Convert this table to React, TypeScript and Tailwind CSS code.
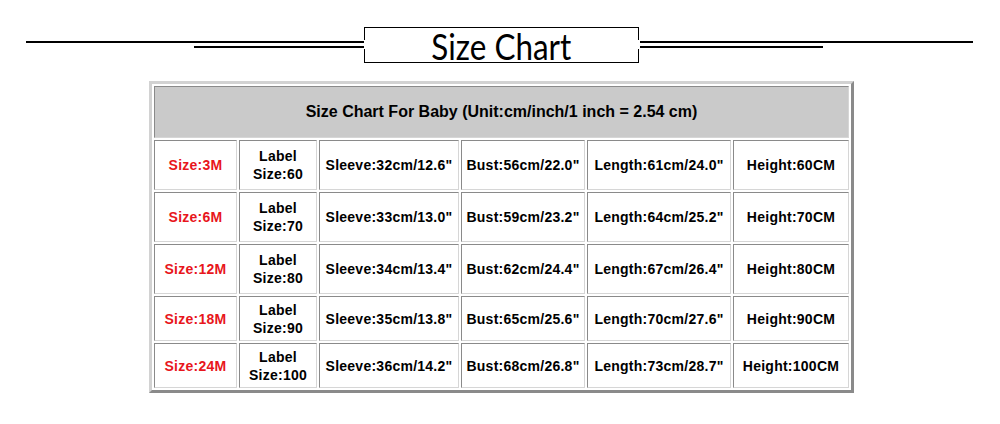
import React from "react";

const rows = [
  ["Size:3M", "60", "Sleeve:32cm/12.6\"", "Bust:56cm/22.0\"", "Length:61cm/24.0\"", "Height:60CM"],
  ["Size:6M", "70", "Sleeve:33cm/13.0\"", "Bust:59cm/23.2\"", "Length:64cm/25.2\"", "Height:70CM"],
  ["Size:12M", "80", "Sleeve:34cm/13.4\"", "Bust:62cm/24.4\"", "Length:67cm/26.4\"", "Height:80CM"],
  ["Size:18M", "90", "Sleeve:35cm/13.8\"", "Bust:65cm/25.6\"", "Length:70cm/27.6\"", "Height:90CM"],
  ["Size:24M", "100", "Sleeve:36cm/14.2\"", "Bust:68cm/26.8\"", "Length:73cm/28.7\"", "Height:100CM"],
];

const cell =
  "flex items-center justify-center text-center border border-t-[#8a8a8a] border-l-[#8a8a8a] border-r-[#d6d6d6] border-b-[#d6d6d6]";

export default function App() {
  return (
    <div className="w-[1000px] h-[424px] bg-white overflow-hidden" style={{ fontFamily: '"Liberation Sans", Arial, sans-serif' }}>
      {/* Title header */}
      <div className="flex items-start pt-[27px] pl-[26px]">
        <div className="w-[338px] flex flex-col items-end pt-[14px]">
          <div className="w-full h-[2px] bg-black" />
          <div className="w-[170px] h-[2px] bg-black mt-[3px]" />
        </div>
        <div className="relative w-[275px] h-[36px] border-t border-b border-black flex items-center justify-center">
          <div className="absolute left-0 top-0 w-px h-[12px] bg-black" />
          <div className="absolute left-0 bottom-0 w-px h-[13px] bg-black" />
          <div className="absolute right-0 top-0 w-px h-[12px] bg-black" />
          <div className="absolute right-0 bottom-0 w-px h-[13px] bg-black" />
          <span
            className="text-[37px] leading-none text-black mt-[1px] scale-x-[0.85] inline-block"
            style={{ fontFamily: 'Lato, "Open Sans", sans-serif' }}
          >
            Size Chart
          </span>
        </div>
        <div className="w-[334px] flex flex-col items-start pt-[14px] pl-[1px]">
          <div className="w-full h-[2px] bg-black" />
          <div className="w-[183px] h-[2px] bg-black mt-[3px]" />
        </div>
      </div>

      {/* Table */}
      <div className="mt-[18px] ml-[149px] w-[705px] border-[3px] border-t-[#d2d2d2] border-l-[#d2d2d2] border-r-[#8a8a8a] border-b-[#8a8a8a] p-[2px]">
        <div className="grid grid-cols-[83px_78px_140px_124px_144px_116px] grid-rows-[52px_50px_50px_50px_45px_45px] gap-[2px] text-[14px] tracking-[0.25px] font-bold text-black leading-[18px]">
          <div className={`${cell} col-span-6 bg-[#cacaca] text-[16px] tracking-normal`}>
            Size Chart For Baby (Unit:cm/inch/1 inch = 2.54 cm)
          </div>
          {rows.map((r, i) => (
            <React.Fragment key={i}>
              <div className={`${cell} text-[#e8161c]`}>{r[0]}</div>
              <div className={cell}>
                <span>
                  Label
                  <br />
                  Size:{r[1]}
                </span>
              </div>
              <div className={cell}>{r[2]}</div>
              <div className={cell}>{r[3]}</div>
              <div className={cell}>{r[4]}</div>
              <div className={cell}>{r[5]}</div>
            </React.Fragment>
          ))}
        </div>
      </div>
    </div>
  );
}
